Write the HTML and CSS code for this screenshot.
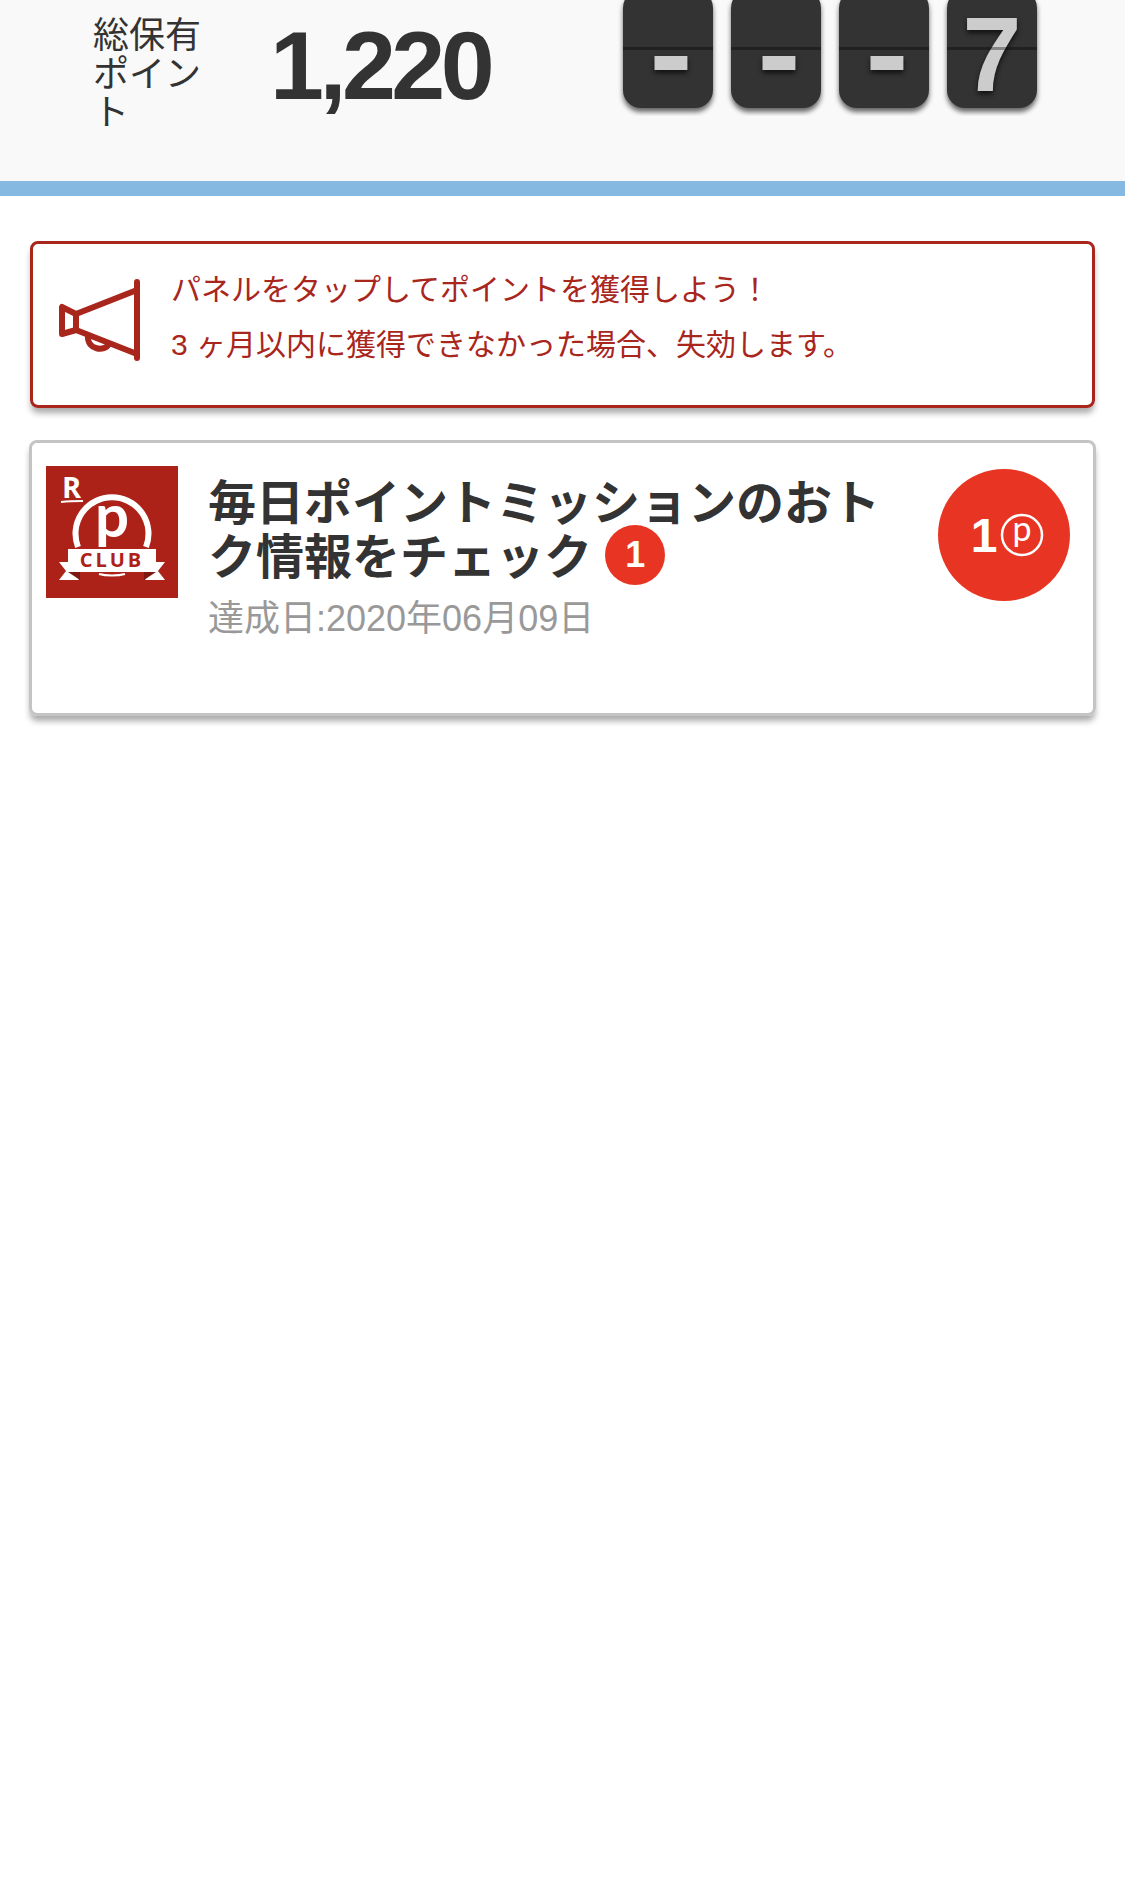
FILE: index.html
```html
<!DOCTYPE html>
<html lang="ja">
<head>
  <meta charset="UTF-8">
  <title>毎日ポイントミッション</title>
  <link rel="stylesheet" href="styles.css">
</head>
<body>
  <div class="summary">
    <div class="summary-label">総保有ポイント</div>
    <div class="summary-value">1,220</div>
    <div class="tiles">
      <div class="tile tile-empty"><span class="dash">-</span></div>
      <div class="tile tile-empty"><span class="dash">-</span></div>
      <div class="tile tile-empty"><span class="dash">-</span></div>
      <div class="tile">7</div>
    </div>
  </div>

  <div class="notice">
    <svg class="notice-icon" viewBox="0 0 90 90">
      <g fill="none" stroke="#a8261c" stroke-width="6" stroke-linecap="round" stroke-linejoin="round">
        <path d="M80 6V82"/>
        <path d="M80 14L19 38V54L80 78"/>
        <path d="M19 38L5 31V58L19 54Z"/>
        <path d="M31 60C30 74 48 76 52 68"/>
      </g>
    </svg>
    <div class="notice-text">
      <p>パネルをタップしてポイントを獲得しよう！</p>
      <p>3 ヶ月以内に獲得できなかった場合、失効します。</p>
    </div>
  </div>

  <div class="card">
    <svg class="card-logo" viewBox="0 0 132 132">
      <rect width="132" height="132" fill="#ad2218"/>
      <text x="16" y="32" class="logo-r">R</text>
      <path d="M15 36C24 35 30 35 37 35" fill="none" stroke="#fff" stroke-width="2"/>
      <path d="M32 81A36.5 36.5 0 1 1 100 81" fill="none" stroke="#fff" stroke-width="6"/>
      <text x="49" y="71" class="logo-p">p</text>
      <polygon points="13,96 22,96 22,106 29,106 33,114 13,114 20,105" fill="#fff"/>
      <polygon points="119,96 110,96 110,106 103,106 99,114 119,114 112,105" fill="#fff"/>
      <polygon points="22,106 34,106 34,114" fill="#7d1810"/>
      <polygon points="110,106 98,106 98,114" fill="#7d1810"/>
      <rect x="22" y="83" width="88" height="23" fill="#fff"/>
      <text x="66" y="101" class="logo-club">CLUB</text>
      <path d="M53 108C60 110 72 110 79 108" fill="none" stroke="#fff" stroke-width="2"/>
    </svg>
    <div class="card-body">
      <div class="card-title">毎日ポイントミッションのおトク情報をチェック <span class="count">1</span></div>
      <div class="card-date">達成日:2020年06月09日</div>
    </div>
    <div class="reward">
      <span class="reward-num">1</span>
      <svg class="reward-mark" viewBox="0 0 44 44">
        <circle cx="22" cy="22" r="20" fill="none" stroke="#fff" stroke-width="2.5"/>
        <text x="22" y="28" class="reward-p">p</text>
      </svg>
    </div>
  </div>
</body>
</html>
```

FILE: styles.css
```css
body {
  min-height: 1903px;
  margin: 0;
  background: #fff;
  color: #333;
  font-family: "Liberation Sans", "Noto Sans CJK JP", sans-serif;
}
p {
  margin: 0;
}
.summary {
  display: flex;
  height: 181px;
  padding-left: 93px;
  background: #f9f9f9;
  border-bottom: 15px solid #85b9e2;
  overflow: hidden;
}
.summary-label {
  width: 110px;
  margin-top: 17px;
  font-size: 36px;
  line-height: 38.5px;
}
.summary-value {
  width: 345px;
  margin-left: 67px;
  font-size: 97px;
  font-weight: bold;
  line-height: 132px;
  letter-spacing: -4.5px;
}
.tiles {
  display: flex;
  gap: 18px;
  height: 116px;
  padding: 0 8px;
  overflow: hidden;
}
.tile {
  position: relative;
  width: 90px;
  height: 99px;
  margin-top: -10px;
  padding-top: 19px;
  background: #333;
  border-radius: 18px;
  box-shadow: 0 4px 5px #666;
  color: #ccc;
  font-size: 106px;
  font-weight: bold;
  line-height: 90px;
  text-align: center;
  text-shadow: 0 3px 5px #111;
}
.tile-empty {
  text-indent: 3px;
}
.dash {
  display: inline-block;
  transform: translateY(-2px) scale(1.22, 1.1);
}
.tile::after {
  content: "";
  position: absolute;
  left: 0;
  right: 0;
  top: 57px;
  height: 3px;
  background: rgba(0, 0, 0, 0.35);
}
.notice {
  display: flex;
  align-items: center;
  gap: 24px;
  height: 161px;
  margin: 45px 30px 0;
  padding-left: 24px;
  border: 3px solid #a8261c;
  border-radius: 8px;
  box-shadow: 0 6px 6px -1px #aaa;
  color: #a8261c;
}
.notice-icon {
  width: 90px;
  height: 90px;
  margin-bottom: 8px;
}
.notice-text {
  padding-bottom: 16px;
  font-size: 30px;
  line-height: 55px;
}
.card {
  display: flex;
  align-items: flex-start;
  height: 270px;
  margin: 32px 29px 30px 29px;
  border: 3px solid #c4c4c4;
  border-radius: 8px;
  box-shadow: 0 6px 6px -1px #aaa;
}
.card-logo {
  flex: none;
  width: 132px;
  height: 132px;
  margin: 23px 0 0 14px;
}
.card-body {
  width: 690px;
  margin: 34px 0 0 30px;
}
.card-title {
  font-size: 48px;
  font-weight: bold;
  line-height: 54px;
}
.count {
  display: inline-block;
  width: 60px;
  height: 60px;
  margin: -10px 0;
  border-radius: 50%;
  background: #e83523;
  color: #fff;
  font-size: 36px;
  line-height: 60px;
  text-align: center;
  vertical-align: 7px;
}
.card-date {
  margin-top: 12px;
  color: #999;
  font-size: 36px;
  line-height: 44px;
}
.reward {
  display: flex;
  flex: none;
  align-items: center;
  justify-content: center;
  gap: 3px;
  width: 132px;
  height: 132px;
  margin: 26px 0 0 40px;
  border-radius: 50%;
  background: #e83523;
  color: #fff;
}
.reward-num {
  margin-left: 7px;
  font-size: 48px;
  font-weight: bold;
}
.reward-mark {
  width: 44px;
  height: 44px;
}
.reward-p {
  fill: #fff;
  font-family: "Lato", sans-serif;
  font-size: 34px;
  text-anchor: middle;
}
.logo-r {
  fill: #fff;
  font-family: "Open Sans", sans-serif;
  font-size: 29px;
  font-weight: bold;
}
.logo-p {
  fill: #fff;
  font-family: "Lato", sans-serif;
  font-size: 60px;
  font-weight: bold;
}
.logo-club {
  fill: #ad2218;
  font-family: "Open Sans", sans-serif;
  font-size: 20px;
  font-weight: bold;
  letter-spacing: 3px;
  text-anchor: middle;
}
```
